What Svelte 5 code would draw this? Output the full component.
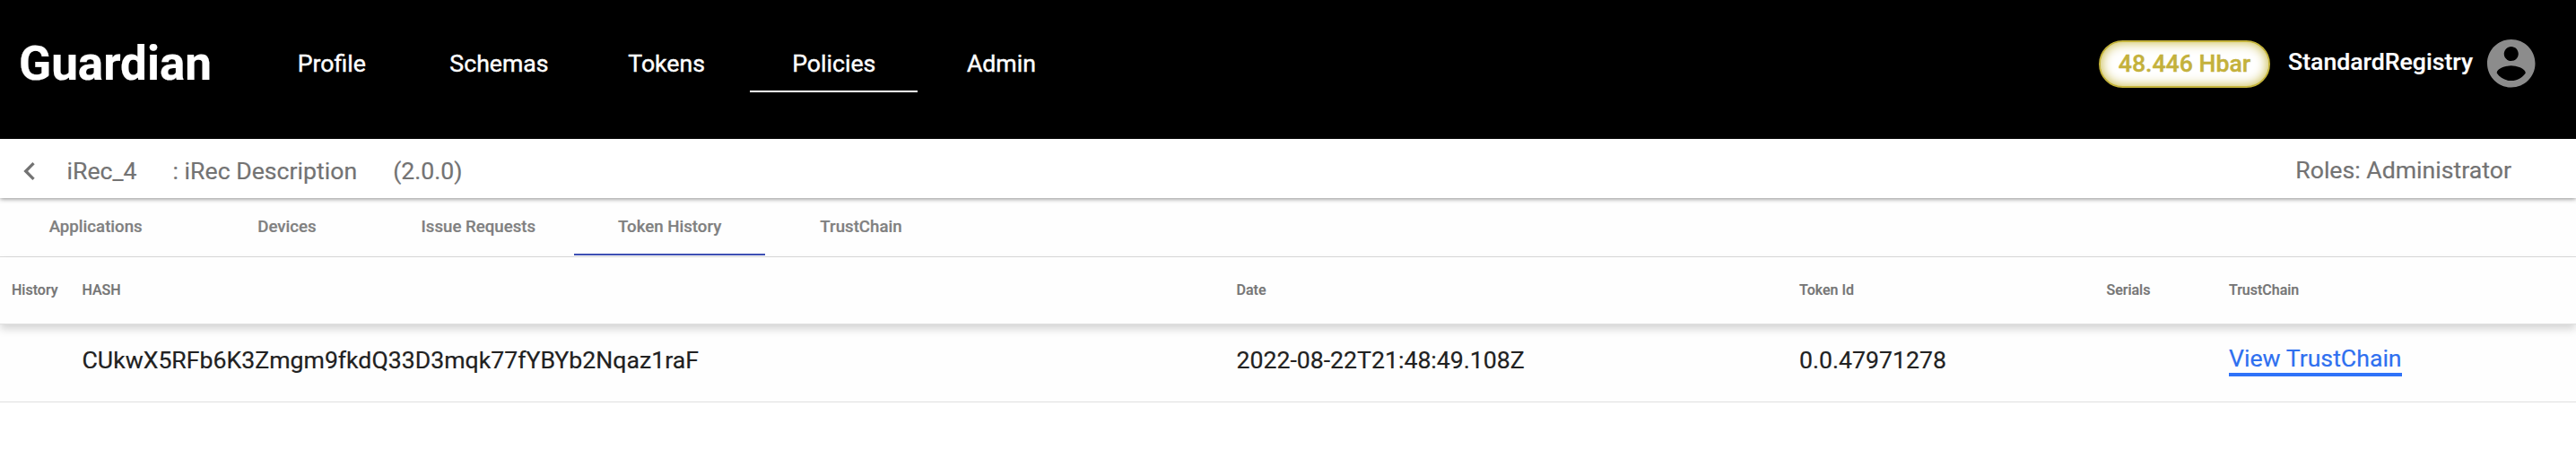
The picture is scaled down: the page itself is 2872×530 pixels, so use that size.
<script>
  const navItems = ['Profile', 'Schemas', 'Tokens', 'Policies', 'Admin'];
  const activeNav = 'Policies';

  const tabs = ['Applications', 'Devices', 'Issue Requests', 'Token History', 'TrustChain'];
  const activeTab = 'Token History';

  const columns = ['History', 'HASH', 'Date', 'Token Id', 'Serials', 'TrustChain'];
  const rows = [
    {
      hash: 'CUkwX5RFb6K3Zmgm9fkdQ33D3mqk77fYBYb2Nqaz1raF',
      date: '2022-08-22T21:48:49.108Z',
      tokenId: '0.0.47971278'
    }
  ];
</script>

<div class="page">
  <header class="topbar">
    <div class="brand">Guardian</div>
    <nav class="nav">
      {#each navItems as item}
        <span class="nav-item" class:active={item === activeNav}>{item}</span>
      {/each}
    </nav>
    <div class="account">
      <span class="balance">48.446 Hbar</span>
      <span class="user">StandardRegistry</span>
      <svg class="avatar" viewBox="2 2 20 20" aria-hidden="true">
        <path
          fill="currentColor"
          d="M12 2C6.48 2 2 6.48 2 12s4.48 10 10 10 10-4.48 10-10S17.52 2 12 2zm0 3c1.66 0 3 1.34 3 3s-1.34 3-3 3-3-1.34-3-3 1.34-3 3-3zm0 14.2c-2.5 0-4.71-1.28-6-3.22.03-1.99 4-3.08 6-3.08 1.99 0 5.97 1.09 6 3.08-1.29 1.94-3.5 3.22-6 3.22z"
        />
      </svg>
    </div>
  </header>

  <section class="policy-bar">
    <svg class="back" viewBox="0 0 24 24" aria-hidden="true">
      <path fill="currentColor" d="M15.41 7.41L14 6l-6 6 6 6 1.41-1.41L10.83 12z" />
    </svg>
    <span class="policy-name">iRec_4</span>
    <span class="policy-desc">: iRec Description</span>
    <span class="policy-version">(2.0.0)</span>
    <span class="roles">Roles: Administrator</span>
  </section>

  <div class="tabs">
    {#each tabs as tab}
      <span class="tab" class:active={tab === activeTab}>{tab}</span>
    {/each}
  </div>

  <div class="table">
    <div class="row head">
      {#each columns as column}
        <span>{column}</span>
      {/each}
    </div>
    {#each rows as row}
      <div class="row body">
        <span></span>
        <span>{row.hash}</span>
        <span>{row.date}</span>
        <span>{row.tokenId}</span>
        <span></span>
        <span><span class="link">View TrustChain</span></span>
      </div>
    {/each}
  </div>
</div>

<style>
  :global(body) {
    margin: 0;
    background: #fff;
  }

  .page {
    min-height: 530px;
    font-family: Roboto, sans-serif;
    font-size: 26.67px;
    color: #212121;
    white-space: nowrap;
    -webkit-text-stroke: 0.2px currentColor;
  }

  .topbar {
    display: flex;
    align-items: flex-start;
    height: 155px;
    box-sizing: border-box;
    padding: 39px 45.5px 0 21px;
    background: #000;
    color: #fff;
  }

  .brand {
    width: 255.5px;
    font-size: 53px;
    font-weight: 700;
    line-height: 64px;
  }

  .nav {
    display: flex;
    -webkit-text-stroke: 0.4px currentColor;
  }

  .nav-item {
    width: 186.67px;
    height: 64px;
    box-sizing: border-box;
    border-bottom: 2px solid transparent;
    text-align: center;
    line-height: 64px;
  }

  .nav-item.active {
    border-bottom-color: #fff;
  }

  .account {
    display: flex;
    align-items: center;
    height: 64px;
    margin-left: auto;
    font-weight: 500;
  }

  .balance {
    width: 191px;
    height: 53px;
    box-sizing: border-box;
    border: 2px solid #c4b43c;
    border-radius: 27px;
    background: #fff;
    box-shadow: inset 0 0 13px #c4b43c;
    color: #c4b13c;
    line-height: 49px;
    text-align: center;
    -webkit-text-stroke: 0.4px currentColor;
  }

  .user {
    width: 206px;
    margin: 0 16px 4px 20px;
    line-height: 56px;
  }

  .avatar {
    width: 53.5px;
    height: 53.5px;
    color: #8c8c8c;
  }

  .policy-bar {
    position: relative;
    z-index: 1;
    display: flex;
    align-items: center;
    height: 66px;
    box-sizing: border-box;
    padding: 5px 72px 0 13px;
    background: #fff;
    box-shadow: 0 1px 5px rgba(0, 0, 0, 0.45);
    color: #737373;
  }

  .back {
    width: 40px;
    height: 40px;
    margin-right: 21.5px;
  }

  .policy-desc {
    margin: 0 40px;
  }

  .roles {
    margin: 0 0 2px auto;
  }

  .tabs {
    display: flex;
    height: 66px;
    box-sizing: border-box;
    border-bottom: 1px solid #dcdcdc;
    background: #fefefe;
  }

  .tab {
    width: 213.33px;
    height: 64px;
    box-sizing: border-box;
    border-bottom: 2px solid transparent;
    color: #808080;
    font-size: 18.67px;
    font-weight: 500;
    line-height: 64px;
    text-align: center;
  }

  .tab.active {
    border-bottom-color: #3f51b5;
  }

  .row {
    display: grid;
    grid-template-columns: 78.5px 1287px 627.5px 342.5px 136.5px 1fr;
    align-items: center;
    box-sizing: border-box;
    padding-left: 13px;
    border-bottom: 1px solid #e0e0e0;
    background: #fefefe;
  }

  .head {
    position: relative;
    height: 75px;
    padding-bottom: 2px;
    color: #757575;
    font-size: 16px;
    font-weight: 500;
    box-shadow: 0 5px 9px rgba(0, 0, 0, 0.17);
  }

  .body {
    height: 87px;
    padding-bottom: 6px;
  }

  .link {
    display: inline-block;
    border-bottom: 4px solid #2f72f8;
    color: #2f70f0;
    line-height: 31px;
  }
</style>
